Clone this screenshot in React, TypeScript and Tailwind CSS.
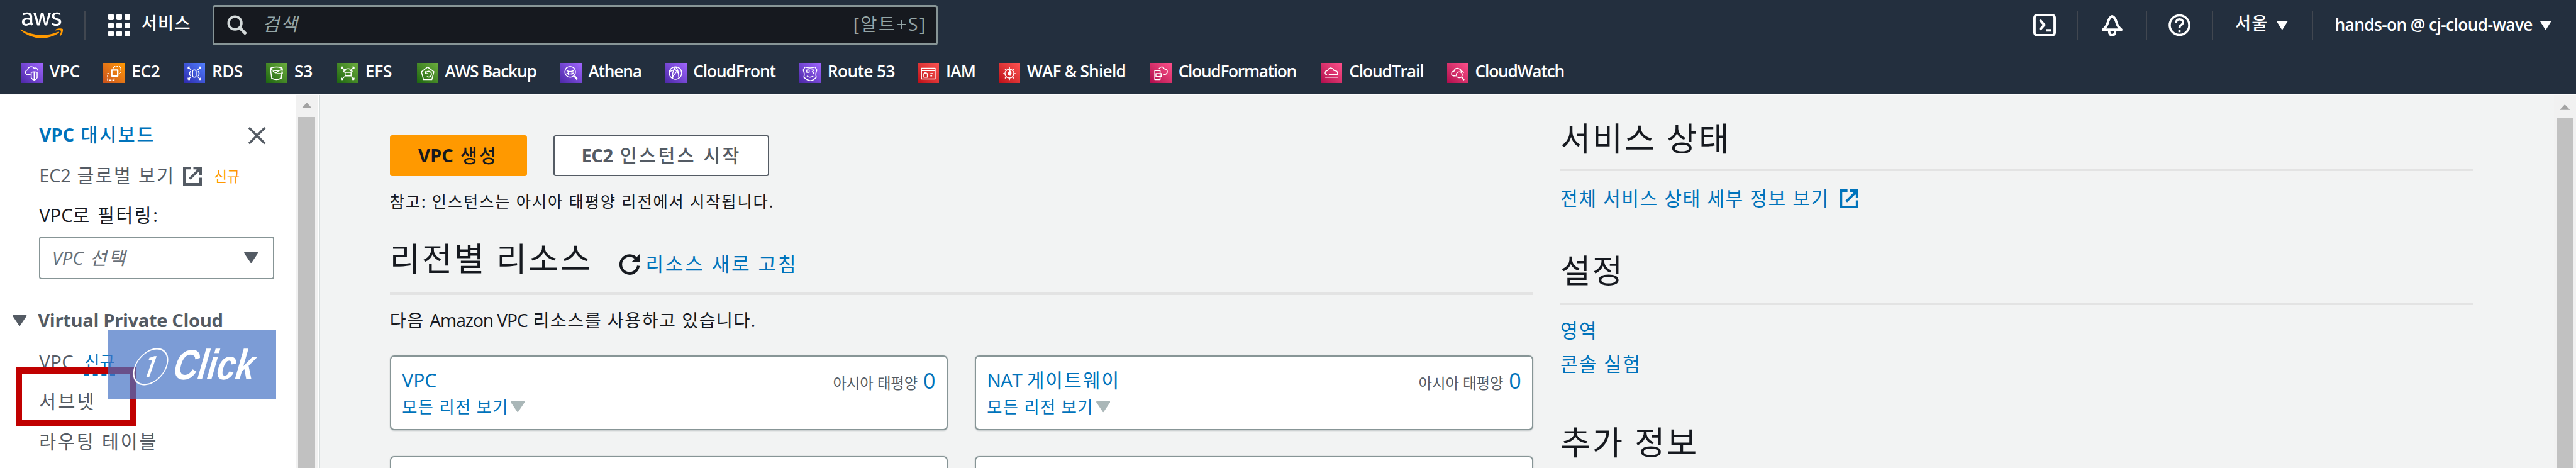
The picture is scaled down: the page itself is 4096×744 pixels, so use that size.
import React from "react";
import type { ReactNode } from "react";
import { FaAws } from "react-icons/fa";

type Service = { name: string; width: string; text: string; tile: string; glyph: ReactNode };

const purple = "bg-gradient-to-tr from-[#4d27a8] to-[#a166ff]";
const orange = "bg-gradient-to-tr from-[#c8511b] to-[#ff9900]";
const blue = "bg-gradient-to-tr from-[#2e27ad] to-[#527fff]";
const green = "bg-gradient-to-tr from-[#1b660f] to-[#6cae3e]";
const red = "bg-gradient-to-tr from-[#bd0816] to-[#ff5252]";
const pink = "bg-gradient-to-tr from-[#b0084d] to-[#ff4f8b]";

const corners = <path d="M7 7l5 5M7 7h3M7 7v3M28 7l-5 5M28 7h-3M28 7v3M7 28l5-5M7 28h3M7 28v-3M28 28l-5-5M28 28h-3M28 28v-3" />;

const services: Service[] = [
  {
    name: "VPC", width: "w-[134px]", text: "tracking-[-0.4px]", tile: purple,
    glyph: <><path d="M15 20H11a4 4 0 0 1-1-8 6 6 0 0 1 11-3 4 4 0 0 1 6 4" /><path d="M16 16q5-2 10 0v9q-2 3-5 4-3-1-5-4zM21 15v13" /></>,
  },
  {
    name: "EC2", width: "w-[131.5px]", text: "tracking-[-0.4px]", tile: orange,
    glyph: <><path d="M14 12h10v10H14z" strokeWidth="2.4" /><path d="M10 18H7v11h11v-3" strokeDasharray="4 1.5" /><path d="M17 9V6h12v12h-3" strokeDasharray="2 2" /></>,
  },
  {
    name: "RDS", width: "w-[134.5px]", text: "tracking-[-0.7px]", tile: blue,
    glyph: <>{corners}<rect x="14.500" y="12" width="6" height="12" rx="2.500" /><path d="M11 14q-3 4 0 8M24 14q3 4 0 8" /></>,
  },
  {
    name: "S3", width: "w-[116px]", text: "tracking-[0px]", tile: green,
    glyph: <><ellipse cx="17" cy="10" rx="10" ry="3" /><path d="M7 10l2 16q8 4 16 0l2-16M16 17l5-4M18 18h9v-3M16 17l-5-3" /></>,
  },
  {
    name: "EFS", width: "w-[130px]", text: "tracking-[-0.2px]", tile: green,
    glyph: <>{corners}<path d="M13 22h10v-6H13zM12 16l-2-2 3-1q1-4 5-3 3-1 4 3l3 1-2 2" /></>,
  },
  {
    name: "AWS Backup", width: "w-[234.5px]", text: "tracking-[-1.2px]", tile: green,
    glyph: <><path d="M17.500 7L28 15l-3.500 13h-14L7 15z" /><path d="M14 14v4h4M14 18a5 5 0 1 1 2 5" /></>,
  },
  {
    name: "Athena", width: "w-[171.5px]", text: "tracking-[-1.2px]", tile: purple,
    glyph: <><circle cx="16" cy="15" r="9" /><path d="M23 22l5 6" strokeWidth="3" /><path d="M10 13q6 3 12 0M10 17q6 3 12 0M13 20v-4M19 20v-4" /></>,
  },
  {
    name: "CloudFront", width: "w-[219.5px]", text: "tracking-[-1.1px]", tile: purple,
    glyph: <><circle cx="17.500" cy="17" r="10.500" /><path d="M17 7q-6 10-4 19M18 7q5 5 5 18M9 14l8-3 5 6M13 23l6-8" /></>,
  },
  {
    name: "Route 53", width: "w-[193.5px]", text: "tracking-[-0.6px]", tile: purple,
    glyph: <><path d="M9 7q8 3 17 0l3 5q-3 6-1 12-4 5-10 6-6-1-11-6 2-6-1-12z" /><path d="M12 12h4v4h-4zM20 12h4l-3 3q4 1 1 4M12 22q5 4 11 0" /></>,
  },
  {
    name: "IAM", width: "w-[132.5px]", text: "tracking-[-0.9px]", tile: red,
    glyph: <><path d="M6 9h23v18H6zM6 13h23" /><path d="M10 18h6v6h-6zM12 18v-2h2v2M21 18h5M21 22h3" /></>,
  },
  {
    name: "WAF & Shield", width: "w-[247.5px]", text: "tracking-[-0.8px]", tile: red,
    glyph: <><circle cx="17.500" cy="18" r="7.500" /><path d="M17.500 7v4M17.500 25v4M7 18h3M25 18h3M10 10l3 3M25 10l-3 3M10 26l3-3M25 26l-3-3" /><path d="M18 13q4 4 1 8-4 0-3-4z" fill="white" /></>,
  },
  {
    name: "CloudFormation", width: "w-[279px]", text: "tracking-[-1.3px]", tile: pink,
    glyph: <><path d="M7 13h9v15H7zM9 18h9v5H9z" /><path d="M14 10q5-7 9 0 6 1 5 6-1 4-6 3" /></>,
  },
  {
    name: "CloudTrail", width: "w-[206px]", text: "tracking-[-1.1px]", tile: pink,
    glyph: <><path d="M10 20q-5-1-2-6 2-1 3-1 3-7 9-3l2 3q6 0 6 5 0 2-3 2" /><path d="M13 20h16M7 24h22M11 20h.1" /></>,
  },
  {
    name: "CloudWatch", width: "w-[190px]", text: "tracking-[-1.2px]", tile: pink,
    glyph: <><path d="M14 22H10q-5-2-2-7 1-1 3-1 2-7 9-4 3 1 3 4 4 0 4 3" /><circle cx="20" cy="20" r="5" /><path d="M24 24l4 5" strokeWidth="2.400" /></>,
  },
];

function ServiceTile({ tile, children }: { tile: string; children: ReactNode }) {
  return (
    <span className={`mt-[2px] block h-[33px] w-[35px] shrink-0 ${tile}`}>
      <svg viewBox="0 0 35 34" className="h-[33px] w-[35px]" fill="none" stroke="white" strokeWidth="1.6" strokeLinejoin="round">
        {children}
      </svg>
    </span>
  );
}

function External({ className }: { className: string }) {
  return (
    <svg viewBox="0 0 31 31" className={`h-[31px] w-[31px] shrink-0 ${className}`} fill="none" stroke="currentColor" strokeWidth="4.4">
      <path d="M13 2.200H2.200v26.600h26.600V18" />
      <path d="M17 2.200h11.800v12" />
      <path d="M28 3L11 20" strokeWidth="4" />
      <path d="M20 2h9v9z" fill="currentColor" strokeWidth="1" />
    </svg>
  );
}

function Caret({ className }: { className: string }) {
  return (
    <svg viewBox="0 0 24 18" preserveAspectRatio="none" className={`shrink-0 ${className}`} fill="currentColor">
      <path d="M1 0h22q1.500 0 .8 1.500L13 17q-1 1.500-2 0L.2 1.500Q-.5 0 1 0z" />
    </svg>
  );
}

function UpArrow({ className }: { className: string }) {
  return (
    <svg viewBox="0 0 18 9" preserveAspectRatio="none" className={className} fill="#a3a3a3">
      <path d="M9 0l9 9H0z" />
    </svg>
  );
}

function Divider({ className = "" }: { className?: string }) {
  return <span className={`h-[49px] w-[2px] shrink-0 bg-[#414750] ${className}`} />;
}

function Header() {
  return (
    <header className="flex h-[153px] shrink-0 flex-col bg-[#232f3e] text-white">
      <div className="flex h-[83px] items-center">
        <div className="ml-[33px] grid h-[56px] w-[70px] shrink-0 place-items-center">
          <FaAws className="h-[56px] w-[70px] [clip-path:inset(0_0_44%_0)] [grid-area:1/1]" />
          <FaAws className="h-[56px] w-[70px] text-[#ff9900] [clip-path:inset(56%_0_0_0)] [grid-area:1/1]" />
        </div>
        <Divider className="ml-[35px]" />
        <div className="ml-[37px] grid h-[37px] w-[36px] shrink-0 grid-cols-3 gap-[4px]">
          {Array.from({ length: 9 }, (_, i) => (
            <span key={i} className="rounded-[2px] bg-white" />
          ))}
        </div>
        <span className="ml-[18px] w-[116px] shrink-0 pb-[5px] text-[28px] leading-[40px] font-medium tracking-[1.4px]">서비스</span>
        <div className="flex h-[66px] w-[1186px] shrink-0 items-center rounded-[4px] border-[3.1px] border-[#879596] bg-[#16191f] text-[#95a5a6]">
          <svg viewBox="0 0 33 33" className="ml-[21px] h-[33px] w-[33px]" fill="none" stroke="#d5dbdb" strokeWidth="4">
            <circle cx="13" cy="13" r="10.500" />
            <path d="M20 20l11 11" strokeWidth="5" />
          </svg>
          <span className="ml-[25px] pb-[4px] text-[30px] leading-[40px] tracking-[2px] italic">검색</span>
          <span className="mr-[15px] ml-auto pb-[3px] text-[29px] leading-[40px] tracking-[2.6px]">[알트+S]</span>
        </div>
        <svg viewBox="0 0 37 37" className="ml-[1790px] h-[37px] w-[37px] shrink-0" fill="none" stroke="white" strokeWidth="4">
          <rect x="2" y="2" width="33" height="33" rx="4" />
          <path d="M11 10l7 8-7 8M21 27h8" />
        </svg>
        <Divider className="ml-[34px]" />
        <svg viewBox="0 0 36 37" className="ml-[38px] h-[37px] w-[36px] shrink-0" fill="none" stroke="white" strokeWidth="4" strokeLinejoin="round">
          <path d="M18 4Q13 6 11 14 9 21 3 26h30q-6-5-8-12-2-8-7-10z" />
          <path d="M13 27q0 8 5 8t5-8" />
        </svg>
        <Divider className="ml-[37px]" />
        <svg viewBox="0 0 36 37" className="ml-[35px] h-[37px] w-[36px] shrink-0" fill="none" stroke="white" strokeWidth="3.6">
          <circle cx="18" cy="18.500" r="16" />
          <path d="M12.500 15q0-6 5.500-6t5.500 5q0 3-3 4.500-2.500 1.500-2.500 4.500M18 26v4" />
        </svg>
        <Divider className="ml-[35px]" />
        <span className="ml-[36px] w-[68px] shrink-0 pb-[5px] text-[28px] leading-[40px] font-medium tracking-[1.4px]">서울</span>
        <Caret className="h-[15px] w-[18px]" />
        <Divider className="ml-[40px]" />
        <span className="ml-[35px] w-[336px] shrink-0 pb-[2px] text-[27px] leading-[36px] font-semibold tracking-[-0.6px] whitespace-nowrap">hands-on @ cj-cloud-wave</span>
        <Caret className="h-[15px] w-[18px]" />
      </div>
      <nav className="flex h-[70px] items-center pl-[35px]">
        {services.map((s) => (
          <a key={s.name} className={`flex shrink-0 items-center gap-[11px] ${s.width}`}>
            <ServiceTile tile={s.tile}>{s.glyph}</ServiceTile>
            <span className={`pb-[2px] text-[27px] leading-[36px] font-semibold whitespace-nowrap ${s.text}`}>{s.name}</span>
          </a>
        ))}
      </nav>
    </header>
  );
}

function Sidebar() {
  return (
    <aside className="flex w-[523px] shrink-0 border-r-[2.1px] border-[#d5dbdb] bg-white text-[30px] leading-[40px] whitespace-nowrap text-[#545b64]">
      <div className="w-[483px] shrink-0 pt-[45px]">
        <div className="flex h-[40px] items-center pl-[64px]">
          <span className="w-[341px] font-medium tracking-[2.900px] text-[#0073bb]">
            <b className="font-bold tracking-[0px]">VPC</b> 대시보드
          </span>
          <svg viewBox="0 0 30 30" className="mt-[3px] h-[30px] w-[30px]" fill="none" stroke="currentColor" strokeWidth="3.6">
            <path d="M2 2l26 26M28 2L2 28" />
          </svg>
        </div>
        <div className="mt-[27px] flex h-[40px] items-center pl-[64px]">
          <span className="w-[235px] tracking-[2.400px]">
            <span className="tracking-[-0.3px]">EC2</span> 글로벌 보기
          </span>
          <External className="mt-[2px] text-[#545b64]" />
          <span className="ml-[20px] pt-[4px] text-[23px] tracking-[-0.4px] text-[#ff9900]">신규</span>
        </div>
        <div className="mt-[25px] pl-[64px] tracking-[2.600px] text-[#16191f]">
          <span className="tracking-[0px]">VPC</span>로 필터링:
        </div>
        <div className="mt-[14px] ml-[64px] flex h-[70px] w-[384px] items-center justify-between rounded-[4px] border-[2.1px] border-[#879596] bg-white pr-[24px] pl-[19px]">
          <span className="pt-[1px] tracking-[2.900px] text-[#687078] italic">
            <span className="tracking-[0px]">VPC</span> 선택
          </span>
          <Caret className="h-[18px] w-[23px]" />
        </div>
        <div className="mt-[48px] flex items-center pl-[21px] font-bold">
          <Caret className="h-[18px] w-[23px]" />
          <span className="ml-[18px] tracking-[-0.4px]">Virtual Private Cloud</span>
        </div>
        <div className="mt-[27px] flex pl-[64px]">
          <span className="w-[74px] tracking-[0.500px]">VPC</span>
          <span className="h-[44px] border-b-[4.200px] border-dashed border-[#0073bb] text-[27px] text-[#0073bb]">신규</span>
        </div>
        <div className="mt-[21px] pl-[64px] tracking-[3.400px]">서브넷</div>
        <div className="mt-[26px] pl-[64px] tracking-[3px]">라우팅 테이블</div>
      </div>
      <div className="flex w-[36px] shrink-0 flex-col items-center bg-[#f1f1f1]">
        <UpArrow className="mt-[13px] h-[9px] w-[16px]" />
        <span className="mt-[14px] w-[28px] flex-1 bg-[#c1c1c1]" />
      </div>
    </aside>
  );
}

function ResourceCard({ children }: { children?: ReactNode }) {
  return (
    <div className="flex h-[122px] items-start justify-between rounded-[7px] border-[2.1px] border-[#879596] bg-white pt-[19px] pr-[18px] pl-[18px] shadow-[0_1px_2px_rgba(0,28,36,0.2)]">
      {children && (
        <>
          <div className="text-[#0073bb]">
            <div className="text-[31px] leading-[40px]">{children}</div>
            <div className="mt-[5px] flex items-center text-[27px] leading-[36px]">
              <span className="w-[178px] tracking-[1.4px]">모든 리전 보기</span>
              <Caret className="h-[18px] w-[23px] text-[#aab7b8]" />
            </div>
          </div>
          <div className="flex items-baseline leading-[40px]">
            <span className="text-[24px] text-[#545b64]">아시아 태평양</span>
            <span className="ml-[9px] text-[35px] text-[#0073bb]">0</span>
          </div>
        </>
      )}
    </div>
  );
}

function Resources() {
  return (
    <section className="ml-[114px] w-[1869px] shrink-0 pt-[66px] whitespace-nowrap text-[#16191f]">
      <div className="flex h-[67px] gap-[44px] text-[30px] leading-[40px] font-medium">
        <button className="h-[67px] w-[224px] rounded-[4px] bg-[#ff9900] pb-[1px] tracking-[3.500px]">
          <b className="font-bold tracking-[0px]">VPC</b> 생성
        </button>
        <button className="h-[67px] w-[352px] rounded-[4px] border-[2.1px] border-[#545b64] bg-white pb-[1px] tracking-[3.600px] text-[#545b64]">
          <b className="font-bold tracking-[-0.5px]">EC2</b> 인스턴스 시작
        </button>
      </div>
      <p className="mt-[23px] text-[26px] leading-[36px] tracking-[1.9px]">참고: 인스턴스는 아시아 태평양 리전에서 시작됩니다.</p>
      <div className="mt-[44px] flex h-[64px] items-center">
        <h1 className="w-[373px] text-[54px] leading-[64px] tracking-[2.800px]">리전별 리소스</h1>
        <svg viewBox="0 0 36 37" className="mt-[20px] h-[37px] w-[36px]" fill="none" stroke="currentColor" strokeWidth="4.500">
          <path d="M30 9A14.500 14.500 0 1 0 33 20" />
          <path d="M35 1v13H22z" fill="currentColor" stroke="none" />
        </svg>
        <a className="ml-[9px] pt-[16px] text-[32px] leading-[40px] tracking-[2.900px] text-[#0073bb]">리소스 새로 고침</a>
      </div>
      <hr className="mt-[23px] h-[4px] border-0 bg-[#e3e3e3]" />
      <p className="mt-[22px] text-[29px] leading-[40px] tracking-[1.500px]">
        다음 <span className="tracking-[-1.100px]">Amazon VPC</span> 리소스를 사용하고 있습니다.
      </p>
      <div className="mt-[37px] grid grid-cols-[912px_913px] gap-x-[44px] gap-y-[42px]">
        <ResourceCard>VPC</ResourceCard>
        <ResourceCard>
          <span className="tracking-[-1px]">NAT</span> <span className="tracking-[2px]">게이트웨이</span>
        </ResourceCard>
        <ResourceCard />
        <ResourceCard />
      </div>
    </section>
  );
}

function Info() {
  const heading = "text-[54px] leading-[64px] tracking-[2.700px] text-[#16191f]";
  const rule = "h-[4px] border-0 bg-[#e3e3e3]";
  return (
    <section className="ml-[44px] w-[1493px] shrink-0 pt-[39px] text-[31px] leading-[40px] whitespace-nowrap text-[#0073bb]">
      <h2 className={heading}>서비스 상태</h2>
      <hr className={`mt-[18px] ${rule}`} />
      <a className="mt-[25px] flex h-[40px] items-center">
        <span className="w-[456px] tracking-[1.600px]">전체 서비스 상태 세부 정보 보기</span>
        <External className="text-[#0073bb]" />
      </a>
      <h2 className={`mt-[65px] ${heading}`}>설정</h2>
      <hr className={`mt-[20px] ${rule}`} />
      <a className="mt-[23px] block tracking-[2.100px]">영역</a>
      <a className="mt-[15px] block tracking-[2.100px]">콘솔 실험</a>
      <h2 className={`mt-[75px] ${heading}`}>추가 정보</h2>
    </section>
  );
}

export default function App() {
  return (
    <div className="h-[744px] w-[4096px] overflow-hidden">
      <div className="relative flex h-[765px] w-[4210px] flex-col overflow-hidden bg-[#f2f3f3] font-['Open_Sans','Noto_Sans_CJK_KR',sans-serif] [zoom:0.97292]">
        <Header />
        <div className="flex h-[612px] shrink-0 border-t-[2.1px] border-[#fcfcfc]">
          <Sidebar />
          <Resources />
          <Info />
          <div className="ml-auto flex w-[36px] shrink-0 flex-col items-center bg-[#f1f1f1]">
            <UpArrow className="mt-[16px] h-[9px] w-[17px]" />
            <span className="mt-[13px] w-[28px] flex-1 bg-[#c1c1c1]" />
          </div>
        </div>
        <div className="absolute top-[600px] left-[26px] h-[97px] w-[197px] border-[10.300px] border-[#c00000]" />
        <div className="absolute top-[540px] left-[176px] flex h-[112px] w-[275px] items-center bg-[#4472c4]/70 pl-[43px] whitespace-nowrap text-white">
          <span className="w-[74px] origin-left [transform:scaleX(0.88)_skewX(-22deg)] font-['Noto_Sans_CJK_KR'] text-[65px] leading-[80px]">①</span>
          <span className="origin-left [transform:scaleX(0.8)_skewX(-20deg)] font-['Liberation_Sans'] text-[69px] leading-[80px] font-bold">Click</span>
        </div>
      </div>
    </div>
  );
}
